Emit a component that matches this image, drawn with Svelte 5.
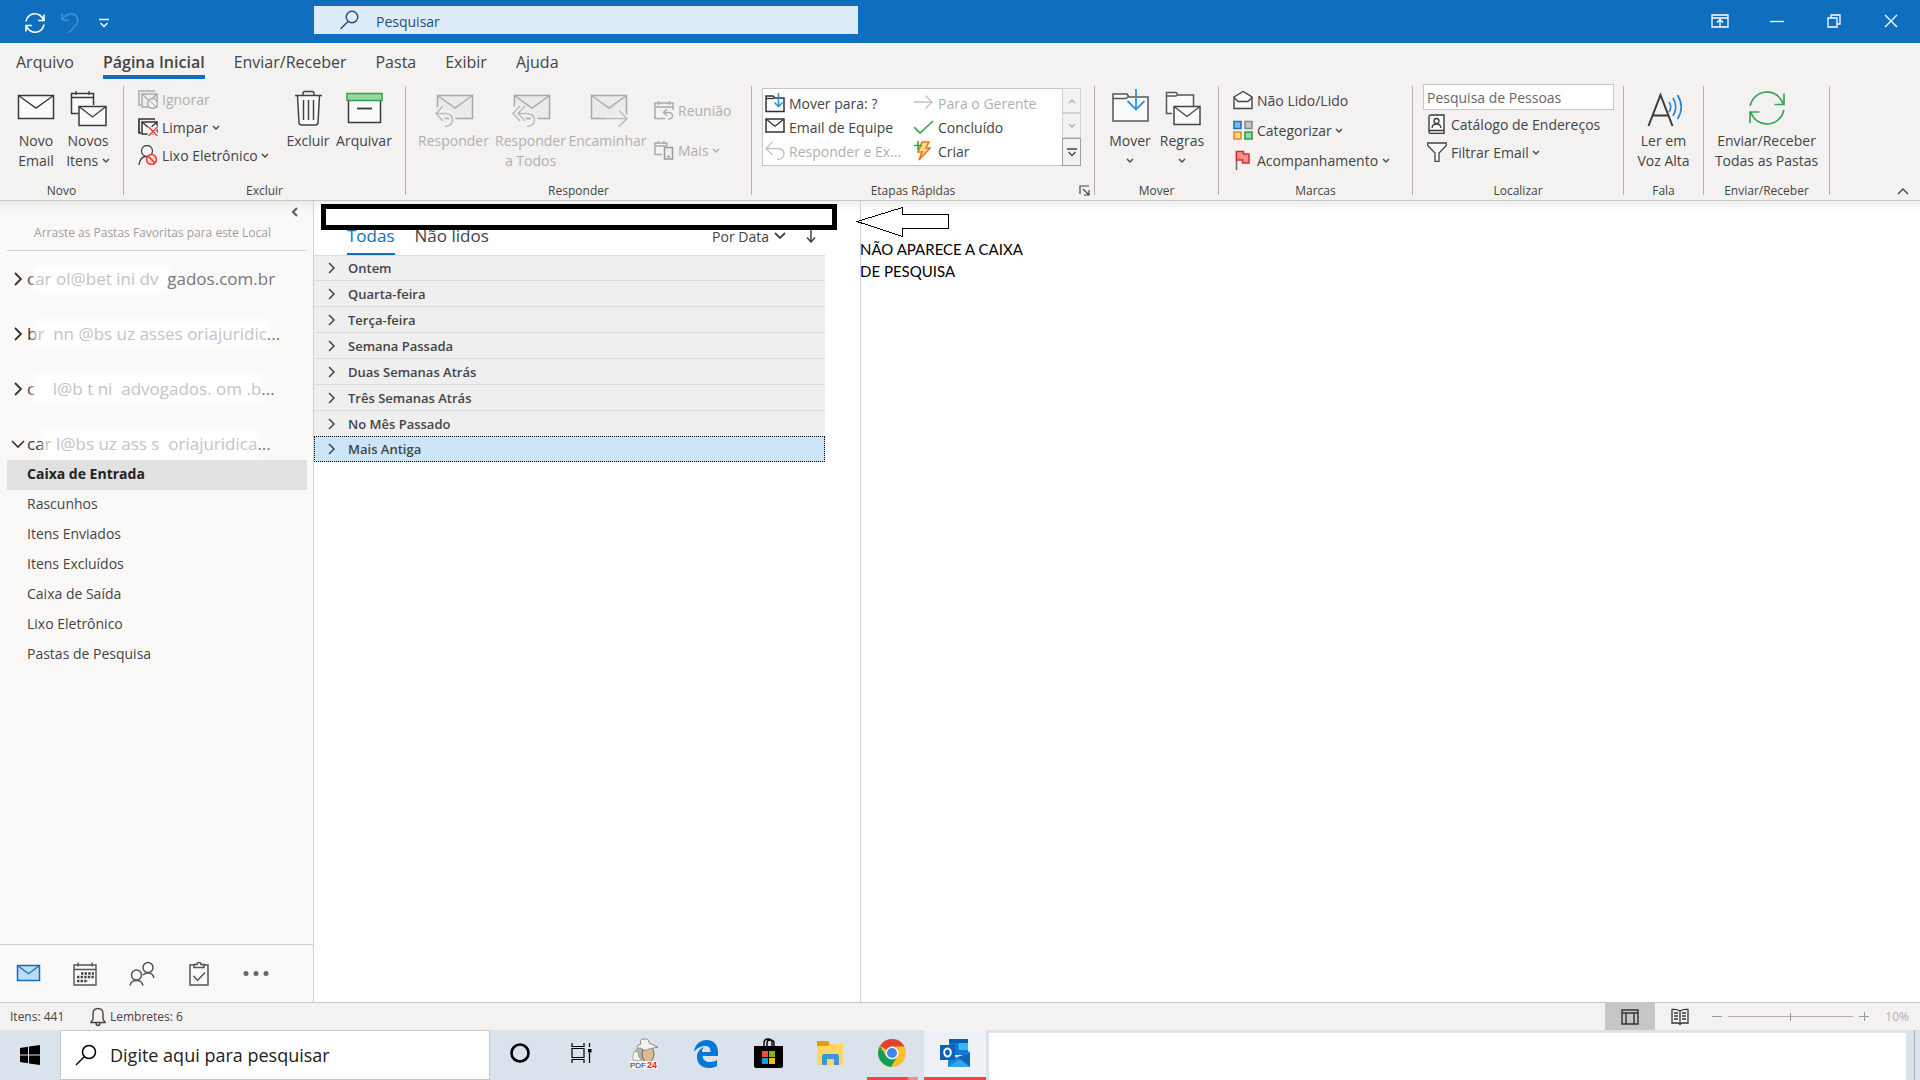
<script lang="ts">
    let search = $state("");
    let people = $state("");
    let taskSearch = $state("");
    let zoom = $state(50);
    let activeFolder = $state("Caixa de Entrada");
    let activeGroup = $state("Mais Antiga");

    const tabs = ["Arquivo", "Página Inicial", "Enviar/Receber", "Pasta", "Exibir", "Ajuda"];

    const folders = [
        "Caixa de Entrada",
        "Rascunhos",
        "Itens Enviados",
        "Itens Excluídos",
        "Caixa de Saída",
        "Lixo Eletrônico",
        "Pastas de Pesquisa"
    ];

    // address names are rubbed out, only some letters stay readable
    const accounts = [
        { start: "c", faded: "ar ol@bet ini dv  ", end: "gados.com.br", open: false },
        { start: "b", faded: "r  nn @bs uz asses oriajuridic", end: "...", open: false },
        { start: "c", faded: "    l@b t ni  advogados. om .b", end: "...", open: false },
        { start: "ca", faded: "r l@bs uz ass s  oriajuridica", end: "...", open: true }
    ];

    const groups = [
        "Ontem",
        "Quarta-feira",
        "Terça-feira",
        "Semana Passada",
        "Duas Semanas Atrás",
        "Três Semanas Atrás",
        "No Mês Passado",
        "Mais Antiga"
    ];

    const steps = [
        { icon: "moveTo", text: "Mover para: ?", off: false },
        { icon: "arrowRight", text: "Para o Gerente", off: true },
        { icon: "mailSmall", text: "Email de Equipe", off: false },
        { icon: "check", text: "Concluído", off: false },
        { icon: "replySmall", text: "Responder e Ex...", off: true },
        { icon: "bolt", text: "Criar", off: false }
    ];

    const nav = [
        { icon: "navMail", label: "Email" },
        { icon: "navCalendar", label: "Calendário" },
        { icon: "navPeople", label: "Pessoas" },
        { icon: "navTasks", label: "Tarefas" },
        { icon: "navMore", label: "Mais opções" }
    ];

    const apps = [
        { icon: "cortana", label: "Cortana" },
        { icon: "taskView", label: "Visão de Tarefas" },
        { icon: "pdf", label: "PDF24" },
        { icon: "edge", label: "Edge" },
        { icon: "store", label: "Store" },
        { icon: "explorer", label: "Explorador" },
        { icon: "chrome", label: "Chrome" },
        { icon: "outlook", label: "Outlook" }
    ];

    const envelope = (x: number, y: number, w: number, h: number, color: string, fill = "#fafafa") =>
        `<path d="M${x} ${y}h${w}v${h}h${-w}z" fill="${fill}" stroke="${color}" stroke-width="1.5"/>
        <path d="M${x} ${y}l${w / 2} ${h * 0.55}l${w / 2} ${-h * 0.55}" fill="none" stroke="${color}" stroke-width="1.3"/>`;

    const line = (d: string, color = "#444", width = 1.3, fill = "none") =>
        `<path d="${d}" fill="${fill}" stroke="${color}" stroke-width="${width}"/>`;

    const cut = "#f3f2f1";

    // 40 x 40
    const big: Record<string, string> = {
        newMail: envelope(2.5, 7.5, 35, 23, "#3b3a39"),
        newItems:
            line("M10 25.5H3.500V5.500H25.500V17", "#3b3a39", 1.5, "#fafafa") +
            line("M3.500 9.500H25.500M8 3V7M21 3V7", "#3b3a39") +
            envelope(11, 18.5, 27, 19, "#3b3a39"),
        trash:
            line("M9.500 8L11 34.500Q11.200 37 14 37H27Q29.800 37 30 34.500L31.500 8", "#444", 1.5, "#fafafa") +
            line("M7 7.500H34M15 7V5.500Q15 3.500 17 3.500H24Q26 3.500 26 5.500V7M15.500 12V32M20.500 12V32M25.500 12V32", "#444", 1.5),
        archive:
            line("M4.500 12V34.500H36.500V12", "#3b3a39", 1.5, "#fafafa") +
            line("M3 5.500H38V12.500H3Z", "#37a04d", 1.5, "#9bd5a6") +
            line("M13 20.500H28", "#3b3a39", 1.8),
        reply:
            envelope(3.5, 7.5, 35, 23, "#aaa8a6", "#ebebeb") +
            line("M9 18L2 25.500L9 33M2 25.500H12Q18.500 26 18.500 32Q18.500 38 11 38.500", cut, 6) +
            line("M9 18L2 25.500L9 33M2 25.500H12Q18.500 26 18.500 32Q18.500 38 11 38.500", "#bcbab8", 1.5),
        replyAll:
            envelope(3.5, 7.5, 35, 23, "#aaa8a6", "#ebebeb") +
            line("M13 18L6 25.500L13 33M6 25.500H16Q23.500 26 23.500 32Q23.500 38 16 38.500M8 18L1 25.500L8 33", cut, 6) +
            line("M14 18L7 25.500L14 33M7 25.500H16Q23.500 26 23.500 32Q23.500 38 16 38.500M9 18L2 25.500L9 33", "#bcbab8", 1.5),
        forward:
            envelope(3.5, 7.5, 35, 23, "#aaa8a6", "#ebebeb") +
            line("M17 30.500H39M31 22.500L39 30.500L31 38.500", cut, 5) +
            line("M17 30.500H39M31 22.500L39 30.500L31 38.500", "#bcbab8", 1.5),
        move:
            line("M3 6H17L19 9H38V33H3Z", "#555", 1.5, "#fafafa") +
            line("M3 10.500H16L19 8", "#555") +
            line("M26 1V21M17.500 13L26 21.500L34.500 13", "#2b94d8", 1.8),
        rules:
            line("M10 25.500H4.500V4.500H14L16 7H31.500V18", "#555", 1.5, "#fafafa") +
            line("M4.500 8H14L16 6.500", "#555") +
            envelope(12, 18.5, 26, 18, "#444"),
        read:
            line("M4.500 38L16.500 7L28.500 38M8.500 27.500H24.500", "#3b3a39", 2) +
            line("M25 14Q28.500 19 25 24M29 10Q34.500 19 29 28M33.500 7Q41 19 33.500 31", "#2b88d0", 1.7),
        sync:
            line("M3.200 18A17 17 0 0 1 36.200 16M37 5.500V16.500H27.500M36.800 22A17 17 0 0 1 3.800 24M3 35V24H12.500", "#3aa655", 1.7)
    };

    // 20 x 20
    const small: Record<string, string> = {
        ignore:
            line("M3 16H1V2H17", "#aaa", 1.5) +
            envelope(4, 5, 15, 13, "#aaa", "#eee") +
            `<circle cx="14.500" cy="14.500" r="5" fill="#eee" stroke="#aaa" stroke-width="1.3"/><path d="M11 11l7 7" stroke="#aaa"/>`,
        clean:
            line("M3 16H1V2H17", "#333", 1.7) +
            envelope(4, 5, 15, 12, "#333") +
            line("M10.500 9.500L19.500 18.500M19.500 9.500L10.500 18.500", cut, 4) +
            line("M10.500 10L19.500 19M19.500 10L10.500 19", "#e8383d", 1.4),
        junk:
            `<circle cx="9" cy="6" r="5.500" fill="#fafafa" stroke="#444" stroke-width="1.3"/>` +
            line("M1 20Q2 12 7.500 11.500", "#444") +
            `<circle cx="13.500" cy="14.500" r="5" fill="#f8d4d5" stroke="#e8383d" stroke-width="1.500"/><path d="M10 11l7 7" stroke="#e8383d" stroke-width="1.500"/>`,
        meeting:
            line("M11 18.500H1V3H19V10M1 7H19M4.500 1V5M15.500 1V5", "#aaa", 1.5) +
            line("M13 9L9.500 12.500L13 16M9.500 12.500H15Q18.500 13 18.500 16Q18.500 19 14 19", "#aaa"),
        more:
            line("M8 14.500H1V3H13V6M1 6H13M4 1V4M10 1V4", "#aaa", 1.5) +
            line("M10.500 7.500H18.500V19H10.500ZM13 16.500H16", "#999", 1.5, "#eee"),
        moveTo:
            line("M1 3H8L10 5H19V18.500H1Z", "#333", 1.5, "#fafafa") +
            line("M1 5.500H9", "#333") +
            line("M13.500 0V13.500M9.500 9.500L13.500 13.500L17.500 9.500", "#2b94d8", 1.6),
        arrowRight: line("M0 9H18M11.500 2.500L18 9L11.500 15.500", "#c4c2c0"),
        mailSmall: envelope(1, 2, 18, 13, "#333"),
        check: line("M0 10L6 16L19 4", "#3aa655", 1.7),
        replySmall: line("M7.500 1L1 7.500L7.500 14M1 7.500H13Q19 8 19 13Q19 18 12 18.500", "#c4c2c0"),
        bolt:
            line("M8 1H15L12 7H16L5 19L8 11H4Z", "#e8771a", 1.6, "#fcd98a") +
            line("M0 4.500H8M4 0V9", "#37a04d", 1.6),
        unread:
            line("M1 7L10 1.500L19 7V18.500H1Z", "#444", 1.4, "#fafafa") +
            line("M1 7.500L5 11.500H15L19 7.500", "#444"),
        category:
            line("M1 1.500H8V8.500H1Z", "#1e73be", 1.6, "#7fb8ea") +
            line("M12 1.500H19V8.500H12Z", "#8a8886", 1.6, "#c8c6c4") +
            line("M1 12H8V19H1Z", "#e8891a", 1.6, "#fcd98a") +
            line("M12 12H19V19H12Z", "#2e9a48", 1.6, "#9bd5a6"),
        flag:
            line("M3.500 1V20", "#666", 1.5) +
            line("M3.500 1.500H10.500V4H16V13H9.500V10H3.500Z", "#d62c2f", 1.5, "#fa8c8e"),
        book:
            line("M4 1H17V19.500H4Q2 19.500 2 17.500V3Q2 1 4 1ZM2.500 16.500H17", "#3b3a39", 1.4, "#fafafa") +
            `<circle cx="9.500" cy="7" r="2.500" fill="none" stroke="#3b3a39" stroke-width="1.300"/>` +
            line("M5 14Q5.500 10 9.500 10Q13.500 10 14 14", "#3b3a39"),
        funnel: line("M0.700 1H19.300V3.500L12 11V19.500H8V11L0.700 3.500Z", "#444", 1.3, "#fafafa")
    };

    // 28 x 28
    const navIcons: Record<string, string> = {
        navMail: envelope(3.5, 5.5, 22, 15, "#106ebe", "#bcdcf5"),
        navCalendar:
            line("M3 5H25V25H3ZM3 9.500H25M7 2.500V6.500M21 2.500V6.500", "#555", 1.4) +
            line("M10 13.500H23M6 17H23M6 21H17", "#444", 2.4).replace("/>", ` stroke-dasharray="2.400 1.200"/>`),
        navPeople:
            `<g fill="none" stroke="#555" stroke-width="1.500"><circle cx="8.500" cy="15" r="5"/><circle cx="20" cy="7.500" r="5"/></g>` +
            line("M2 25.500Q3 20.500 8.500 20.500Q14 20.500 15 25.500M15 15Q16.500 13 20 13Q25 13 26 18", "#555", 1.5),
        navTasks:
            line("M9 5H5V25H23V5H19M9 7.500V4.500H12Q12 2.500 14 2.500Q16 2.500 16 4.500H19V7.500Z", "#555", 1.5) +
            line("M8.500 16L12.500 20.500L20 12.500", "#555", 1.5),
        navMore: `<g fill="#666"><circle cx="4" cy="13.500" r="2.500"/><circle cx="14" cy="13.500" r="2.500"/><circle cx="24" cy="13.500" r="2.500"/></g>`
    };

    // 30 x 30
    const appIcons: Record<string, string> = {
        cortana: `<circle cx="14" cy="15" r="8.500" fill="none" stroke="#000" stroke-width="2.600"/>`,
        taskView:
            line("M4 5V8.500H16V5M4 25V21.500H16V25M4 10.500H16V19.500H4ZM21.500 5V9M21.500 15V25", "#000", 1.2) +
            `<path d="M20 11h3.500v3.500h-3.500z"/>`,
        pdf:
            `<ellipse cx="13" cy="16" rx="9" ry="9" fill="#b9b4aa"/><ellipse cx="18" cy="16" rx="6" ry="8" fill="#d9bd8e" stroke="#6e675c"/>
            <path d="M11 6Q9 1 14 1Q19 0 19 5L28 9L19 11Q16 14 10 10Q6 11 8 7Z" fill="#f4f3ef" stroke="#8d8a84"/>
            <path d="M4 14Q2 19 3 22L12 23Q7 18 8 13Z" fill="#f4f3ef" stroke="#8d8a84" stroke-width=".700"/>
            <path d="M0 23h28v8H0z" fill="#f4f4f4"/>
            <text x="0" y="30" font-family="Liberation Sans" font-size="8" fill="#333">PDF</text><text x="17" y="30" font-family="Liberation Sans" font-weight="bold" font-size="9" fill="#f02020">24</text>`,
        edge: `<path transform="translate(2 2)" d="M0 12C1 4 6 0 13 0C20 0 24 5 24 12V16H8.500C9 20 12 22 16 22C19 22 21.500 21 23 20V26C20 27.500 17.500 28 15 28C7.500 28 3 23.500 3 17C3 12.500 5.500 9 10 7C8.500 8.500 8 10 8 12H16.500C16.500 8 15 6 11 6C6.500 6 2.500 8.500 0 12Z" fill="#0078d7"/>`,
        store:
            line("M10 8V5Q10 1 14 1Q18 1 18 5V8M13 8V5Q13 2 16 2Q20 2 20 5V8", "#000", 1.4) +
            `<path d="M0 8h29v20q0 2-2 2H2q-2 0-2-2z"/><path d="M8 13h6v6H8z" fill="#f25022"/><path d="M15 13h6v6h-6z" fill="#7fba00"/><path d="M8 20h6v6H8z" fill="#00a4ef"/><path d="M15 20h6v6h-6z" fill="#ffb900"/>`,
        explorer:
            `<path d="M1 3h11l2 3h13v21H1z" fill="#fdd663"/><path d="M1 3h11l2 3-2 2H1z" fill="#dfa000"/><path d="M6 27V18q0-2 2-2h13q2 0 2 2v9h-5v-6h-7v6z" fill="#3a96dd"/>`,
        chrome:
            `<g transform="translate(-1)"><circle cx="15" cy="15" r="14" fill="#fbc02d"/>
            <path d="M15 15L3 8A14 14 0 0 1 27.500 8.500H15Z" fill="#db4437"/>
            <path d="M2.900 8A14 14 0 0 0 14 29L20.500 18L15 15L9.500 19Z" fill="#0f9d58"/>
            <circle cx="15" cy="15" r="6.400" fill="#fff"/><circle cx="15" cy="15" r="5" fill="#4285f4"/></g>`,
        outlook:
            `<path d="M9 1h19v16H9z" fill="#0f78d4"/><path d="M18.500 5h9.500v7h-9.500z" fill="#35b8f1"/><path d="M9 1h19v4H9z" fill="#0a5cb0"/><path d="M8 16l11 4 11-7v16H8z" fill="#1a86db"/><path d="M8 29l22-14v14z" fill="#30a8ea"/><path d="M30 15v14L17 19z" fill="#1066b5"/><path d="M0 7h15v15H0z" fill="#0a62bb"/>
            <ellipse cx="7.500" cy="14.500" rx="3.300" ry="4" fill="none" stroke="#fff" stroke-width="2"/>`
    };
</script>

{#snippet chevron()}
    <svg class="chevron" viewBox="0 0 8 6"><path d="M1 1l3 3 3-3" fill="none" stroke="currentColor" stroke-width="1.4" /></svg>
{/snippet}

{#snippet bigButton(icon: string, first: string, second = "", off = false, drop = false)}
    <button class="big" class:off>
        <svg width="40" height="40" viewBox="0 0 40 40">{@html big[icon]}</svg>
        <span>{first}</span>
        {#if second || drop}
            <span>{second} {#if drop}{@render chevron()}{/if}</span>
        {/if}
    </button>
{/snippet}

{#snippet smallButton(icon: string, text: string, off = false, drop = false)}
    <button class="small" class:off>
        <svg width="20" height="20" viewBox="0 0 20 20">{@html small[icon]}</svg>
        <span>{text} {#if drop}{@render chevron()}{/if}</span>
    </button>
{/snippet}

<div class="window">
    <header class="titlebar">
        <div class="quick">
            <button aria-label="Enviar/Receber tudo">
                <svg width="22" height="22" viewBox="0 0 22 22" fill="none" stroke="#fff" stroke-width="1.6">
                    <path d="M2 9.500A9 9 0 0 1 19.500 8M20 2.500V8.500H14M20 12.500A9 9 0 0 1 2.500 14M2 19.500V13.500H8" />
                </svg>
            </button>
            <button aria-label="Desfazer">
                <svg width="20" height="22" viewBox="0 0 20 22" fill="none" stroke="#3c8fd6" stroke-width="1.6">
                    <path d="M2 1V8H9M2 8C6 1 14 0 17 5C20 10 15 15 8 21" />
                </svg>
            </button>
            <button aria-label="Personalizar">
                <svg width="10" height="10" viewBox="0 0 10 10" fill="none" stroke="#fff" stroke-width="1.4">
                    <path d="M0 1.500H10M1.500 5L5 8.500L8.500 5" />
                </svg>
            </button>
        </div>
        <label class="search">
            <svg width="20" height="20" viewBox="0 0 20 20" fill="none" stroke="#1b4f82" stroke-width="1.4">
                <circle cx="12" cy="7" r="5.800" /><path d="M8 11.500L0.500 19" />
            </svg>
            <input aria-label="Pesquisar" placeholder="Pesquisar" bind:value={search} />
        </label>
        <div class="controls">
            <button aria-label="Opções da faixa">
                <svg width="18" height="14" viewBox="0 0 18 14" fill="none" stroke="#fff" stroke-width="1.3">
                    <path d="M1 1H17V13H1ZM1 4H17M9 13V6M6 8.500L9 5.500L12 8.500" />
                </svg>
            </button>
            <button aria-label="Minimizar">
                <svg width="14" height="14" viewBox="0 0 14 14" stroke="#fff" stroke-width="1.3"><path d="M0 7.500H14" /></svg>
            </button>
            <button aria-label="Restaurar">
                <svg width="14" height="14" viewBox="0 0 14 14" fill="none" stroke="#fff" stroke-width="1.3">
                    <path d="M1 4H10V13H1ZM4 4V1H13V10H10" />
                </svg>
            </button>
            <button aria-label="Fechar">
                <svg width="14" height="14" viewBox="0 0 14 14" stroke="#fff" stroke-width="1.4"><path d="M1 1L13 13M13 1L1 13" /></svg>
            </button>
        </div>
    </header>

    <nav class="tabs">
        {#each tabs as tab, i}
            <button class:active={i === 1}>{tab}</button>
        {/each}
    </nav>

    <section class="ribbon">
        <div class="group novo">
            <div class="tools">
                {@render bigButton("newMail", "Novo", "Email")}
                {@render bigButton("newItems", "Novos", "Itens", false, true)}
            </div>
            <div class="caption"><span>Novo</span></div>
        </div>
        <div class="group excluir">
            <div class="tools">
                <div class="stack">
                    {@render smallButton("ignore", "Ignorar", true)}
                    {@render smallButton("clean", "Limpar", false, true)}
                    {@render smallButton("junk", "Lixo Eletrônico", false, true)}
                </div>
                {@render bigButton("trash", "Excluir")}
                {@render bigButton("archive", "Arquivar")}
            </div>
            <div class="caption"><span>Excluir</span></div>
        </div>
        <div class="group responder">
            <div class="tools">
                {@render bigButton("reply", "Responder", "", true)}
                {@render bigButton("replyAll", "Responder", "a Todos", true)}
                {@render bigButton("forward", "Encaminhar", "", true)}
                <div class="stack">
                    {@render smallButton("meeting", "Reunião", true)}
                    {@render smallButton("more", "Mais", true, true)}
                </div>
            </div>
            <div class="caption"><span>Responder</span></div>
        </div>
        <div class="group etapas">
            <div class="tools">
                <div class="gallery">
                    <div class="steps">
                        {#each steps as step}
                            {@render smallButton(step.icon, step.text, step.off)}
                        {/each}
                    </div>
                    <div class="scroll">
                        <button aria-label="Acima" class="off"><svg width="8" height="6" viewBox="0 0 8 6"><path d="M1 5l3-3 3 3" fill="none" stroke="currentColor" stroke-width="1.3" /></svg></button>
                        <button aria-label="Abaixo" class="off">{@render chevron()}</button>
                        <button aria-label="Mais etapas" class="last"><svg width="10" height="9" viewBox="0 0 10 9"><path d="M0 1h10M1.500 4L5 7.500 8.500 4" fill="none" stroke="currentColor" stroke-width="1.3" /></svg></button>
                    </div>
                </div>
            </div>
            <div class="caption">
                <span>Etapas Rápidas</span>
                <button aria-label="Gerenciar etapas"><svg width="11" height="11" viewBox="0 0 11 11"><path d="M1 9V1h9M4 4l6 6M10 5v5H5" fill="none" stroke="#444" stroke-width="1.2" /></svg></button>
            </div>
        </div>
        <div class="group mover">
            <div class="tools">
                {@render bigButton("move", "Mover", "", false, true)}
                {@render bigButton("rules", "Regras", "", false, true)}
            </div>
            <div class="caption"><span>Mover</span></div>
        </div>
        <div class="group marcas">
            <div class="tools">
                <div class="stack">
                    {@render smallButton("unread", "Não Lido/Lido")}
                    {@render smallButton("category", "Categorizar", false, true)}
                    {@render smallButton("flag", "Acompanhamento", false, true)}
                </div>
            </div>
            <div class="caption"><span>Marcas</span></div>
        </div>
        <div class="group localizar">
            <div class="tools">
                <div class="stack">
                    <input aria-label="Pesquisa de Pessoas" placeholder="Pesquisa de Pessoas" bind:value={people} />
                    {@render smallButton("book", "Catálogo de Endereços")}
                    {@render smallButton("funnel", "Filtrar Email", false, true)}
                </div>
            </div>
            <div class="caption"><span>Localizar</span></div>
        </div>
        <div class="group fala">
            <div class="tools">{@render bigButton("read", "Ler em", "Voz Alta")}</div>
            <div class="caption"><span>Fala</span></div>
        </div>
        <div class="group enviar">
            <div class="tools">{@render bigButton("sync", "Enviar/Receber", "Todas as Pastas")}</div>
            <div class="caption"><span>Enviar/Receber</span></div>
        </div>
        <button class="collapse" aria-label="Recolher faixa">
            <svg width="12" height="8" viewBox="0 0 12 8"><path d="M1 7l5-5 5 5" fill="none" stroke="#444" stroke-width="1.4" /></svg>
        </button>
    </section>

    <main>
        <aside>
            <button class="hide" aria-label="Recolher painel">
                <svg width="8" height="10" viewBox="0 0 8 10"><path d="M6 1L2 5l4 4" fill="none" stroke="#666" stroke-width="2.4" /></svg>
            </button>
            <p class="favorites">Arraste as Pastas Favoritas para este Local</p>
            <div class="accounts">
                {#each accounts as account}
                    <button class="account">
                        {#if account.open}
                            <svg width="14" height="10" viewBox="0 0 14 10"><path d="M1 2l6 6 6-6" fill="none" stroke="#333" stroke-width="1.6" /></svg>
                        {:else}
                            <svg width="14" height="14" viewBox="0 0 14 14"><path d="M4 1l6 6-6 6" fill="none" stroke="#333" stroke-width="1.8" /></svg>
                        {/if}
                        <span class="address">{account.start}<span class="faded">{account.faded}</span><span class="tail">{account.end}</span></span>
                    </button>
                {/each}
            </div>
            <div class="folders">
                {#each folders as folder}
                    <button class:active={folder === activeFolder} onclick={() => (activeFolder = folder)}>{folder}</button>
                {/each}
            </div>
            <div class="modules">
                {#each nav as item}
                    <button aria-label={item.label}><svg width="28" height="28" viewBox="0 0 28 28">{@html navIcons[item.icon]}</svg></button>
                {/each}
            </div>
        </aside>

        <section class="list">
            <div class="filters">
                <button class="active">Todas</button>
                <button>Não lidos</button>
                <button class="sort">Por Data <svg width="12" height="8" viewBox="0 0 12 8"><path d="M1 1l5 5 5-5" fill="none" stroke="currentColor" stroke-width="1.8" /></svg></button>
                <button class="order" aria-label="Inverter ordem"><svg width="10" height="16" viewBox="0 0 10 16"><path d="M5 0v15M1 10.500L5 15l4-4.500" fill="none" stroke="#444" stroke-width="1.500" /></svg></button>
            </div>
            <div class="rows">
                {#each groups as group}
                    <button class:selected={group === activeGroup} onclick={() => (activeGroup = group)}>
                        <svg width="8" height="12" viewBox="0 0 8 12"><path d="M1 1l5 5-5 5" fill="none" stroke="#444" stroke-width="1.5" /></svg>
                        {group}
                    </button>
                {/each}
            </div>
            <div class="blackbox"></div>
        </section>

        <section class="reading">
            <div class="note">
                <svg width="94" height="32" viewBox="0 0 94 32"><path d="M1 15.500L46.500 1.500V8.500H92.500V22.500H46.500V30.500Z" fill="#fff" stroke="#000" shape-rendering="crispEdges" /></svg>
                <p>NÃO APARECE A CAIXA<br />DE PESQUISA</p>
            </div>
        </section>
    </main>

    <footer class="status">
        <span class="items">Itens: 441</span>
        <svg width="16" height="20" viewBox="0 0 16 20" fill="none" stroke="#444" stroke-width="1.4">
            <path d="M1 15.500H15L13 12V7Q13 1.500 8 1.500Q3 1.500 3 7V12ZM6 16Q6 18.500 8 18.500Q10 18.500 10 16" />
        </svg>
        <span class="reminders">Lembretes: 6</span>
        <button class="view active" aria-label="Normal">
            <svg width="18" height="16" viewBox="0 0 18 16" fill="none" stroke="#333" stroke-width="1.4"><path d="M1 1H17V15H1ZM1 4H17M5 4V15M13 4V15" /></svg>
        </button>
        <button class="view" aria-label="Leitura">
            <svg width="18" height="18" viewBox="0 0 18 18" fill="none" stroke="#333" stroke-width="1.3"><path d="M9 3Q6 1 1 1.500V15H7L9 16.500L11 15H17V1.500Q12 1 9 3ZM9 3V16M3 5H7M3 8H7M3 11H7M11 5H15M11 8H15M11 11H15" /></svg>
        </button>
        <button class="step" aria-label="Reduzir"><svg width="10" height="10" viewBox="0 0 10 10" stroke="#999"><path d="M0 4.500H10" /></svg></button>
        <input class="zoom" type="range" aria-label="Zoom" bind:value={zoom} />
        <button class="step" aria-label="Ampliar"><svg width="10" height="10" viewBox="0 0 10 10" stroke="#999"><path d="M0 4.500H10M5.500 0V9" /></svg></button>
        <span class="percent">10%</span>
    </footer>

    <div class="taskbar">
        <button class="start" aria-label="Iniciar">
            <svg width="20" height="20" viewBox="0 0 20 20"><path d="M0 3l8-1.200v7.700H0zM9 1.600L20 0v9.500H9zM0 10.500h8v7.700L0 17zM9 10.500h11V20L9 18.400z" /></svg>
        </button>
        <label class="tasksearch">
            <svg width="22" height="22" viewBox="0 0 22 22" fill="none" stroke="#000" stroke-width="1.500"><circle cx="14" cy="8" r="6.500" /><path d="M9.500 12.500L1 21" /></svg>
            <input aria-label="Digite aqui para pesquisar" placeholder="Digite aqui para pesquisar" bind:value={taskSearch} />
        </label>
        <div class="apps">
            {#each apps as app}
                <button class={app.icon} aria-label={app.label}><svg width="30" height="31" viewBox="0 0 30 31">{@html appIcons[app.icon]}</svg></button>
            {/each}
        </div>
        <div class="blank"></div>
        <button class="desktop" aria-label="Mostrar área de trabalho"></button>
    </div>
</div>

<style>
    :global(body) {
        margin: 0;
    }

    .window {
        display: flex;
        flex-direction: column;
        min-height: 100vh;
        font-family: "Open Sans", "Noto Sans", sans-serif;
        font-size: 14px;
        color: #444;
        background-color: #fff;
    }

    .window * {
        box-sizing: border-box;
    }

    button, input {
        font: inherit;
        color: inherit;
        background: none;
        border: none;
        border-radius: 0;
        padding: 0;
        margin: 0;
        outline: none;
    }

    button {
        white-space: nowrap;
    }

    svg {
        flex-shrink: 0;
        display: block;
    }

    .titlebar {
        display: flex;
        align-items: center;
        height: 43px;
        background-color: #106ebe;
    }

    .quick {
        display: flex;
        align-items: center;
        gap: 14px;
        width: 314px;
        padding: 2px 0 0 24px;
    }

    .quick button:last-child {
        margin-left: 5px;
    }

    .search {
        display: flex;
        align-items: center;
        gap: 16px;
        width: 544px;
        height: 28px;
        margin-bottom: 3px;
        padding-left: 26px;
        background-color: #deecf9;
    }

    .search input {
        flex: 1;
        padding-top: 2px;
    }

    .search input::placeholder {
        color: #1b4f82;
        opacity: 1;
    }

    .controls {
        display: flex;
        margin: 0 1px 2px auto;
    }

    .controls button {
        display: flex;
        justify-content: center;
        width: 57px;
    }

    .tabs {
        display: flex;
        gap: 29px;
        height: 37px;
        padding-left: 16px;
        background-color: #f3f2f1;
        font-size: 16px;
    }

    .tabs button {
        height: 36px;
        padding-top: 5px;
        border-bottom: 4px solid transparent;
    }

    .tabs .active {
        font-weight: 600;
        border-color: #106ebe;
    }

    .ribbon {
        display: flex;
        height: 121px;
        padding: 6px 0 5px;
        background-color: #f3f2f1;
        border-bottom: 1px solid #c8c6c4;
    }

    .group {
        display: flex;
        flex-direction: column;
        flex-shrink: 0;
        border-right: 1px solid #b3b0ad;
    }

    .tools {
        display: flex;
        flex: 1;
        align-items: flex-start;
    }

    .caption {
        display: flex;
        align-items: center;
        height: 10px;
        font-size: 12px;
    }

    .caption span {
        flex: 1;
        text-align: center;
    }

    .caption button {
        width: 20px;
        padding-left: 5px;
    }

    .big {
        display: flex;
        flex-direction: column;
        align-items: center;
        width: 52px;
        padding-top: 2px;
        line-height: 20px;
    }

    .big svg {
        margin-bottom: 3px;
    }

    .big .chevron, .small .chevron {
        display: inline-block;
        margin: 0 0 2px;
    }

    .chevron {
        width: 8px;
        height: 6px;
    }

    .small {
        display: flex;
        align-items: center;
        gap: 4px;
        height: 28px;
    }

    .off {
        color: #b1afad;
    }

    .stack {
        display: flex;
        flex-direction: column;
        margin-top: -1px;
    }

    .novo {
        width: 124px;
    }

    .novo .tools {
        padding-left: 10px;
    }

    .excluir {
        width: 282px;
    }

    .excluir .tools {
        padding-left: 14px;
    }

    .excluir .stack {
        width: 142px;
    }

    .excluir .big {
        width: 56px;
    }

    .responder {
        width: 346px;
    }

    .responder .tools {
        padding-left: 9px;
    }

    .responder .big {
        width: 77px;
    }

    .responder .stack {
        padding: 5px 0 0 8px;
    }

    .responder .small {
        height: 40px;
    }

    .etapas {
        width: 343px;
    }

    .etapas .tools {
        padding: 2px 0 0 10px;
    }

    .gallery {
        display: flex;
        width: 319px;
        height: 78px;
        background-color: #fff;
        border: 1px solid #c8c6c4;
    }

    .steps {
        display: grid;
        grid-template-columns: 149px 1fr;
        flex: 1;
        padding: 2px;
    }

    .steps .small {
        height: 24px;
    }

    .scroll {
        display: grid;
        grid-template-rows: 1fr 1fr 28px;
        width: 19px;
        margin: -1px;
    }

    .scroll button {
        display: flex;
        align-items: center;
        justify-content: center;
        background-color: #f3f2f1;
        border: 1px solid #d2d0ce;
    }

    .scroll .last {
        border-color: #a19f9d;
    }

    .mover {
        width: 124px;
    }

    .mover .tools {
        padding-left: 9px;
    }

    .marcas {
        width: 194px;
    }

    .marcas .tools {
        padding-left: 14px;
    }

    .marcas .small {
        height: 30px;
    }

    .localizar {
        width: 211px;
    }

    .localizar .tools {
        padding-left: 10px;
    }

    .localizar input {
        width: 191px;
        height: 26px;
        margin-top: -1px;
        padding-left: 3px;
        background-color: #fff;
        border: 1px solid #c8c6c4;
    }

    .localizar input::placeholder {
        color: #666;
        opacity: 1;
    }

    .localizar .small {
        padding-left: 4px;
    }

    .fala {
        width: 80px;
    }

    .fala .big, .enviar .big {
        width: 100%;
    }

    .enviar {
        width: 126px;
    }

    .collapse {
        align-self: flex-end;
        margin: 0 11px 0 auto;
    }

    main {
        display: flex;
        flex: 1;
        background-image: linear-gradient(#eee, #fff 10px);
    }

    aside {
        display: flex;
        flex-direction: column;
        width: 314px;
        flex-shrink: 0;
        background-image: linear-gradient(#ebebea, #faf9f8 10px);
        border-right: 1px solid #d2d0ce;
    }

    .hide {
        align-self: flex-end;
        margin: 6px 14px 0 0;
    }

    .favorites {
        margin: 7px 6px 12px 7px;
        padding: 0 9px 8px 0;
        border-bottom: 1px solid #d2d0ce;
        font-size: 12px;
        line-height: 18px;
        text-align: center;
        color: #a19f9d;
    }

    .accounts {
        display: flex;
        flex-direction: column;
        gap: 23px;
    }

    .account {
        display: flex;
        align-items: center;
        gap: 2px;
        height: 32px;
        padding-left: 11px;
        font-size: 17px;
        color: #333;
    }

    .address {
        display: flex;
        max-width: 262px;
        padding-bottom: 2px;
        white-space: pre;
        text-align: left;
    }

    .faded {
        overflow: hidden;
        background-color: #fff;
        box-shadow: 0 0 6px 2px #fff;
        color: #c4c4c4;
    }

    .tail {
        color: #777;
    }

    .folders {
        display: flex;
        flex-direction: column;
        flex: 1;
        padding: 0 6px 0 7px;
    }

    .folders button {
        height: 30px;
        padding: 0 0 4px 20px;
        text-align: left;
    }

    .folders .active {
        background-color: #e1e1e1;
        color: #222;
        font-weight: bold;
    }

    .modules {
        display: flex;
        gap: 29px;
        height: 58px;
        padding-left: 14px;
        border-top: 1px solid #d2d0ce;
    }

    .list {
        position: relative;
        width: 547px;
        border-right: 1px solid #d2d0ce;
    }

    .filters {
        display: flex;
        align-items: flex-end;
        width: 511px;
        height: 54px;
        padding: 0 9px 0 33px;
        font-size: 17px;
    }

    .filters button {
        height: 40px;
        margin-right: 20px;
        padding-top: 2px;
        border-bottom: 2px solid transparent;
    }

    .filters .active {
        color: #106ebe;
        border-color: #106ebe;
    }

    .filters .sort {
        display: flex;
        align-items: center;
        gap: 5px;
        margin-left: auto;
        padding-top: 4px;
        font-size: 14px;
    }

    .filters .order {
        margin-right: 0;
    }

    .rows {
        width: 511px;
    }

    .rows button {
        display: flex;
        align-items: center;
        gap: 12px;
        width: 100%;
        height: 26px;
        padding-left: 14px;
        background-color: #efefef;
        border-top: 1px solid #dcdcdc;
        font-size: 13px;
        font-weight: 600;
    }

    .rows button:first-child {
        height: 25px;
    }

    .rows .selected {
        background-color: #cde6f7;
        border: 1px dotted #000;
        padding-left: 13px;
    }

    /* drawn over the filter row */
    .blackbox {
        position: absolute;
        top: 3px;
        left: 7px;
        width: 516px;
        height: 26px;
        border: 5px solid #000;
        background-color: #fff;
    }

    .reading {
        flex: 1;
    }

    .note {
        margin: 5px 0 0 -5px;
        font-family: Lato, sans-serif;
        font-size: 15px;
        line-height: 22px;
        color: #000;
    }

    .note svg {
        position: relative;
    }

    .note p {
        margin: 0 0 0 4px;
    }

    .status {
        display: flex;
        align-items: center;
        height: 28px;
        padding: 0 11px 0 10px;
        background-color: #f3f2f1;
        border-top: 1px solid #c8c6c4;
        font-size: 12px;
    }

    .items {
        width: 80px;
    }

    .reminders {
        flex: 1;
        margin-left: 4px;
    }

    .view {
        display: flex;
        align-items: center;
        justify-content: center;
        width: 50px;
        height: 27px;
    }

    .view.active {
        background-color: #c8c6c4;
    }

    .view + .step {
        margin-left: 7px;
    }

    .zoom {
        appearance: none;
        width: 125px;
        height: 9px;
        margin: 0 6px;
        background-image: linear-gradient(#b3b0ad, #b3b0ad);
        background-size: 100% 1px;
        background-position: center;
        background-repeat: no-repeat;
    }

    .zoom::-webkit-slider-thumb {
        appearance: none;
        width: 1px;
        height: 8px;
        background-color: #999;
    }

    .percent {
        margin-left: auto;
        padding-left: 16px;
        color: #b1afad;
    }

    .taskbar {
        display: flex;
        height: 50px;
        background-color: #dae2eb;
    }

    .start {
        display: flex;
        align-items: center;
        justify-content: center;
        width: 60px;
    }

    .tasksearch {
        display: flex;
        align-items: center;
        gap: 13px;
        width: 430px;
        padding-left: 14px;
        background-color: #fff;
        border: 1px solid #c8c8c8;
    }

    .tasksearch input {
        flex: 1;
        font-size: 18px;
    }

    .tasksearch input::placeholder {
        color: #222;
        opacity: 1;
    }

    .apps {
        display: flex;
    }

    .apps button {
        display: flex;
        align-items: center;
        justify-content: center;
        width: 62px;
        border-bottom: 3px solid transparent;
    }

    .apps .chrome {
        background-image: linear-gradient(90deg, transparent 5px, #f94144 5px 46px, #f98b8d 46px 56px, transparent 56px);
        background-size: 100% 3px;
        background-position: bottom;
        background-repeat: no-repeat;
        background-origin: border-box;
    }

    .apps .outlook {
        background-color: #eef2f7;
        border-color: #f94144;
    }

    .blank {
        flex: 1;
        margin: 3px 0 0 3px;
        background-color: #fff;
    }

    .desktop {
        width: 14px;
        background-image: linear-gradient(90deg, transparent 8px, #a9b2bc 8px 9px, transparent 9px);
    }
</style>
